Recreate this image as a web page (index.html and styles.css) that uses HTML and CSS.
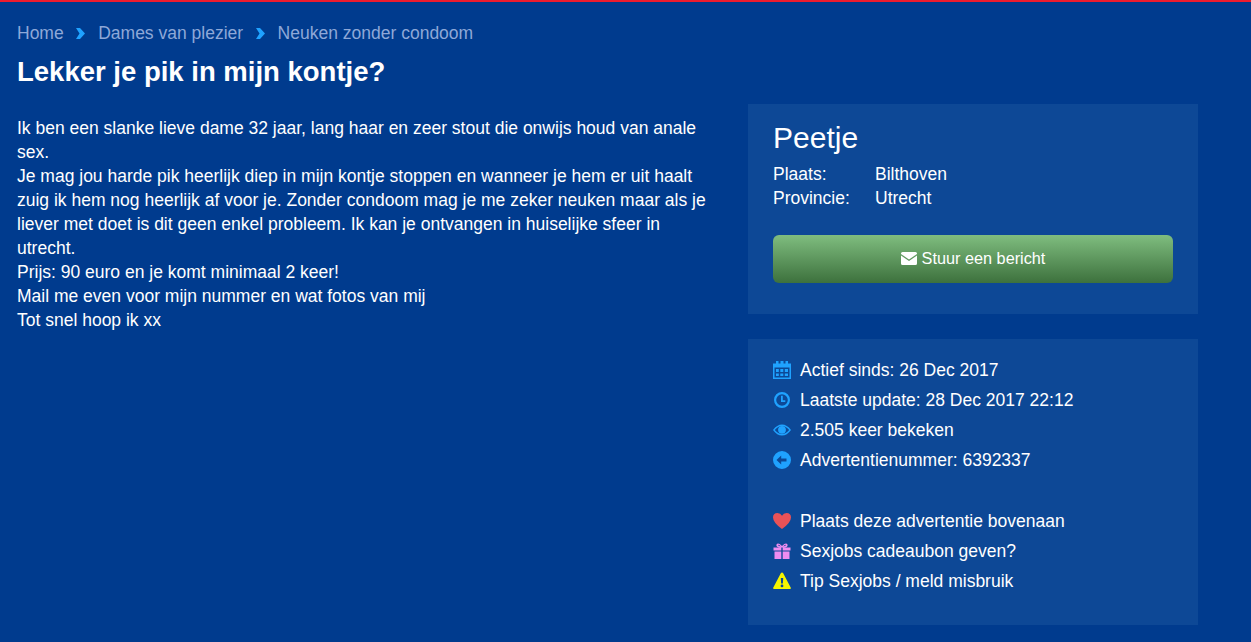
FILE: index.html
```html
<!DOCTYPE html>
<html lang="en">
	<head>
		<meta charset="UTF-8" />
		<title>Lekker je pik in mijn kontje?</title>
		<link rel="stylesheet" href="styles.css">
	</head>

	<body>
		<div class="container">
			<div class="breadcrumb">
				<a href="#">Home</a>
				<svg class="chevron" viewBox="0 0 9 11"><path d="M0 0h4l5 5.500L4 11H0l3.500-5.500z" /></svg>
				<a href="#">Dames van plezier</a>
				<svg class="chevron" viewBox="0 0 9 11"><path d="M0 0h4l5 5.500L4 11H0l3.500-5.500z" /></svg>
				<a href="#">Neuken zonder condoom</a>
			</div>
			<h1>Lekker je pik in mijn kontje?</h1>
			<div class="columns">
				<div class="story">
					Ik ben een slanke lieve dame 32 jaar, lang haar en zeer stout die onwijs houd van anale sex.<br>
					Je mag jou harde pik heerlijk diep in mijn kontje stoppen en wanneer je hem er uit haalt zuig ik hem nog heerlijk af voor je. Zonder condoom mag je me zeker neuken maar als je liever met doet is dit geen enkel probleem. Ik kan je ontvangen in huiselijke sfeer in utrecht.<br>
					Prijs: 90 euro en je komt minimaal 2 keer!<br>
					Mail me even voor mijn nummer en wat fotos van mij<br>
					Tot snel hoop ik xx
				</div>
				<div class="sidebar">
					<div class="panel contact">
						<h2>Peetje</h2>
						<div class="fact"><span class="label">Plaats:</span><span>Bilthoven</span></div>
						<div class="fact"><span class="label">Provincie:</span><span>Utrecht</span></div>
						<button class="message">
							<svg class="envelope" viewBox="0 0 16 13">
								<path d="M0 2V1.500q0-1.500 1.500-1.500h13Q16 0 16 1.500V2L8 7.500z" />
								<path d="M0 3.500v8Q0 13 1.500 13h13q1.500 0 1.500-1.500v-8L8 9z" />
							</svg>
							Stuur een bericht
						</button>
					</div>
					<div class="panel info">
						<ul class="meta">
							<li>
								<svg class="icon blue" viewBox="0 0 18 18">
									<path fill-rule="evenodd" d="M3 0h2.500v2.500h2V0h3v2.500h2V0H15v2.500h3V18H0V2.500h3zM1.500 6.500v10h15v-10zM3 8h2.800v3H3zM7.300 8h3v3h-3zM11.800 8H15v3h-3.200zM3 12.500h2.800v2.500H3zM7.300 12.500h3V15h-3zM11.800 12.500H15V15h-3.200z" />
								</svg>
								Actief sinds: 26 Dec 2017
							</li>
							<li>
								<svg class="icon blue" viewBox="0 0 18 18">
									<path fill-rule="evenodd" d="M9 1a8 8 0 1 1 0 16A8 8 0 0 1 9 1zm0 2.200a5.800 5.800 0 1 0 0 11.600A5.800 5.800 0 0 0 9 3.200zM8 4.800h1.800v4.400h2.500V11H8z" />
								</svg>
								Laatste update: 28 Dec 2017 22:12
							</li>
							<li>
								<svg class="icon blue" viewBox="0 0 18 18">
									<path fill-rule="evenodd" d="M0 9q4-5.500 9-5.500T18 9q-4 5.500-9 5.500T0 9zm1.800 0q3.400 4 7.200 4t7.200-4Q12.800 5 9 5T1.800 9z" />
									<circle cx="9" cy="8.800" r="3.900" />
								</svg>
								2.505 keer bekeken
							</li>
							<li>
								<svg class="icon blue" viewBox="0 0 18 18">
									<path fill-rule="evenodd" d="M9 0a9 9 0 1 1 0 18A9 9 0 0 1 9 0zM3.500 9l4.700 4.500v-3H13.500v-3H8.200v-3z" />
								</svg>
								Advertentienummer: 6392337
							</li>
						</ul>
						<ul class="meta">
							<li>
								<svg class="icon red" viewBox="0 0 18 18">
									<path d="M9 17Q0 10.500 0 5.500 0 1 4.500 1 7.500 1 9 3.800 10.500 1 13.500 1 18 1 18 5.500 18 10.500 9 17z" />
								</svg>
								Plaats deze advertentie bovenaan
							</li>
							<li>
								<svg class="icon pink" viewBox="0 0 18 18">
									<path fill-rule="evenodd" d="M1.500 9.500h6.800V17H1.500zM9.700 9.500h6.800V17H9.700zM.5 5.500h7.800v3H.5zM9.700 5.500h7.800v3H9.700zM9 5.500Q2.500 6 3.500 2.500 5 0 9 4 13 0 14.500 2.500 15.500 6 9 5.500zM7.800 4.300Q5.500 2 5.200 3 5 4.300 7.800 4.300zM10.200 4.300q2.800 0 2.600-1.300Q12.500 2 10.200 4.300z" />
								</svg>
								Sexjobs cadeaubon geven?
							</li>
							<li>
								<svg class="icon yellow" viewBox="0 0 18 18">
									<path fill-rule="evenodd" d="M9 .500q.800 0 1.200.800l7.600 14.400q.5 1.100-1 1.300H1.200q-1.500-.2-1-1.300l7.600-14.400Q8.200.500 9 .500zM7.800 6l.3 5.500h1.800l.3-5.500zM9 12.500a1.400 1.400 0 1 0 0 2.800 1.400 1.400 0 0 0 0-2.800z" />
								</svg>
								Tip Sexjobs / meld misbruik
							</li>
						</ul>
					</div>
				</div>
			</div>
		</div>
	</body>
</html>
```

FILE: styles.css
```css
body {
	margin: 0;
	background: #003b8e;
	border-top: 2px solid #ed1c2e;
	color: #fff;
	font-family: "Liberation Sans", Arial, sans-serif;
	font-size: 17.5px;
	line-height: 24px;
}

.container {
	padding: 19px 53px 17px 17px;
}

.breadcrumb {
	display: flex;
	align-items: center;
	height: 24px;
	gap: 12.750px;
}

.breadcrumb a {
	color: #8ea8d8;
	text-decoration: none;
}

.chevron {
	width: 9px;
	height: 11px;
	fill: #1fa2ff;
}

h1 {
	margin: 11px 0 16px;
	font-size: 27.5px;
	line-height: 32px;
	font-weight: bold;
}

.columns {
	display: flex;
	justify-content: space-between;
}

.story {
	width: 698px;
	padding-top: 12px;
}

.sidebar {
	width: 450px;
	display: flex;
	flex-direction: column;
	gap: 25px;
}

.panel {
	background: #0d4896;
	padding: 16px 25px 31px;
}

.panel h2 {
	margin: 0 0 6px;
	font-size: 30px;
	line-height: 36px;
	font-weight: normal;
}

.fact {
	display: flex;
}

.label {
	width: 102px;
}

.message {
	display: flex;
	align-items: center;
	justify-content: center;
	gap: 5px;
	width: 100%;
	height: 48px;
	margin-top: 25px;
	padding: 0 0 2px;
	border: none;
	border-radius: 6px;
	background: linear-gradient(#7fbd7f, #3d713d);
	color: #fff;
	font-family: inherit;
	font-size: 16.250px;
}

.envelope {
	width: 16px;
	height: 13px;
	fill: #fff;
}

.info {
	padding: 16px 25px 29px;
}

.meta {
	list-style: none;
	margin: 0;
	padding: 0;
}

.meta + .meta {
	margin-top: 31px;
}

.meta li {
	display: flex;
	align-items: center;
	gap: 9px;
	height: 30px;
}

.icon {
	width: 18px;
	height: 18px;
	flex-shrink: 0;
}

.blue {
	fill: #1fa2ff;
}

.red {
	fill: #e95257;
}

.pink {
	fill: #ee8cf0;
}

.yellow {
	fill: #f5f500;
}
```
